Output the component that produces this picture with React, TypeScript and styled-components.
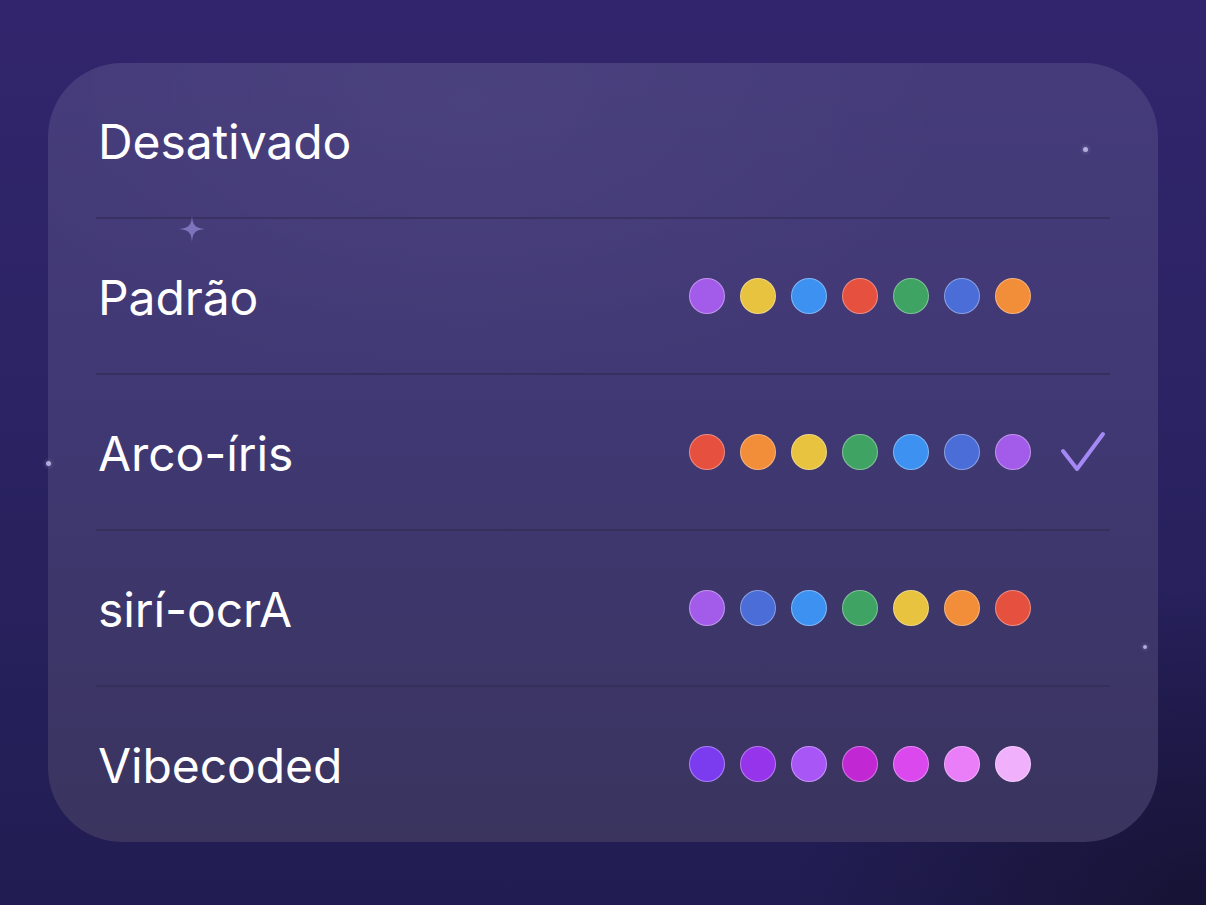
import styled, { createGlobalStyle } from "styled-components";

const GlobalStyle = createGlobalStyle`
  html, body {
    margin: 0;
    padding: 0;
  }
  body {
    font-family: Inter, "Noto Sans", "Liberation Sans", sans-serif;
    -webkit-font-smoothing: antialiased;
  }
`;

interface Palette {
  name: string;
  colors: string[];
  selected?: boolean;
}

const purple = "#a35ce9";
const yellow = "#e8c33f";
const blue = "#3d92f1";
const red = "#e5503f";
const green = "#3fa363";
const indigo = "#4b6dd8";
const orange = "#f28d39";

const palettes: Palette[] = [
  { name: "Desativado", colors: [] },
  { name: "Padrão", colors: [purple, yellow, blue, red, green, indigo, orange] },
  {
    name: "Arco-íris",
    colors: [red, orange, yellow, green, blue, indigo, purple],
    selected: true,
  },
  { name: "sirí-ocrA", colors: [purple, indigo, blue, green, yellow, orange, red] },
  {
    name: "Vibecoded",
    colors: ["#7b3cf0", "#9534ea", "#a856f6", "#c128d4", "#da48ee", "#e97ef8", "#f0b0fb"],
  },
];

// little background stars that sit over the card
const stars = [
  { x: 1085, y: 149, size: 5 },
  { x: 48, y: 463, size: 5 },
  { x: 1145, y: 647, size: 4 },
];

const Sparkle = () => (
  <SparkleIcon width="28" height="28" viewBox="0 0 28 28">
    <path
      d="M14 1 C14.9 10 16.2 12.6 27 14 C16.2 15.4 14.9 18 14 27 C13.1 18 11.8 15.4 1 14 C11.8 12.6 13.1 10 14 1 Z"
      fill="rgba(150, 140, 215, 0.7)"
    />
  </SparkleIcon>
);

const Check = () => (
  <svg width="46" height="42" viewBox="0 0 46 42">
    <path
      d="M3 20 L17 38 L43 3"
      fill="none"
      stroke="#a489f4"
      strokeWidth="4"
      strokeLinecap="round"
      strokeLinejoin="round"
    />
  </svg>
);

export default function App() {
  return (
    <>
      <GlobalStyle />
      <Page>
        <Card>
          {palettes.map((p, i) => (
            <Row key={p.name} $first={i === 0}>
              <Label>{p.name}</Label>
              <Dots>
                {p.colors.map((c, j) => (
                  <Dot key={j} $color={c} />
                ))}
              </Dots>
              <CheckSlot>{p.selected && <Check />}</CheckSlot>
            </Row>
          ))}
        </Card>
        <Sparkle />
        {stars.map((s, i) => (
          <Star key={i} style={{ left: s.x - s.size / 2, top: s.y - s.size / 2, width: s.size, height: s.size }} />
        ))}
      </Page>
    </>
  );
}

const Page = styled.div`
  position: relative;
  width: 1206px;
  height: 905px;
  box-sizing: border-box;
  padding: 63px 48px 0 48px;
  overflow: hidden;
  background:
    radial-gradient(ellipse 420px 320px at 1206px 905px, rgba(18, 14, 40, 0.7), rgba(18, 14, 40, 0) 100%),
    linear-gradient(180deg, #32256d 0%, #2b2363 45%, #211d52 100%);
`;

const Card = styled.div`
  width: 1110px;
  height: 779px;
  box-sizing: border-box;
  padding: 0 48px;
  border-radius: 74px;
  background:
    radial-gradient(ellipse 500px 300px at 420px 40px, rgba(255, 255, 255, 0.03), rgba(255, 255, 255, 0)),
    linear-gradient(180deg, #453b7b 0%, #403873 45%, #3a345f 100%);
  display: flex;
  flex-direction: column;
`;

const Row = styled.div<{ $first: boolean }>`
  height: ${({ $first }) => ($first ? "154px" : "156px")};
  box-sizing: border-box;
  border-top: ${({ $first }) => ($first ? "none" : "2px solid rgba(48, 42, 78, 0.55)")};
  display: flex;
  align-items: center;
`;

const Label = styled.div`
  flex: 1;
  padding: 3px 0 0 2px;
  color: #ffffff;
  font-size: 48px;
  font-weight: 400;
  letter-spacing: -0.1px;
  line-height: 1;
`;

const Dots = styled.div`
  display: flex;
  gap: 15px;
`;

const Dot = styled.div<{ $color: string }>`
  width: 36px;
  height: 36px;
  box-sizing: border-box;
  border-radius: 50%;
  background: ${({ $color }) => $color};
  border: 1.5px solid rgba(255, 255, 255, 0.35);
`;

const CheckSlot = styled.div`
  width: 50px;
  height: 44px;
  margin-left: 29px;
  display: flex;
  align-items: center;
  justify-content: flex-start;
`;

const SparkleIcon = styled.svg`
  position: absolute;
  left: 178px;
  top: 215px;
`;

const Star = styled.div`
  position: absolute;
  border-radius: 50%;
  background: rgba(200, 195, 240, 0.85);
  box-shadow: 0 0 4px rgba(200, 195, 240, 0.5);
`;
